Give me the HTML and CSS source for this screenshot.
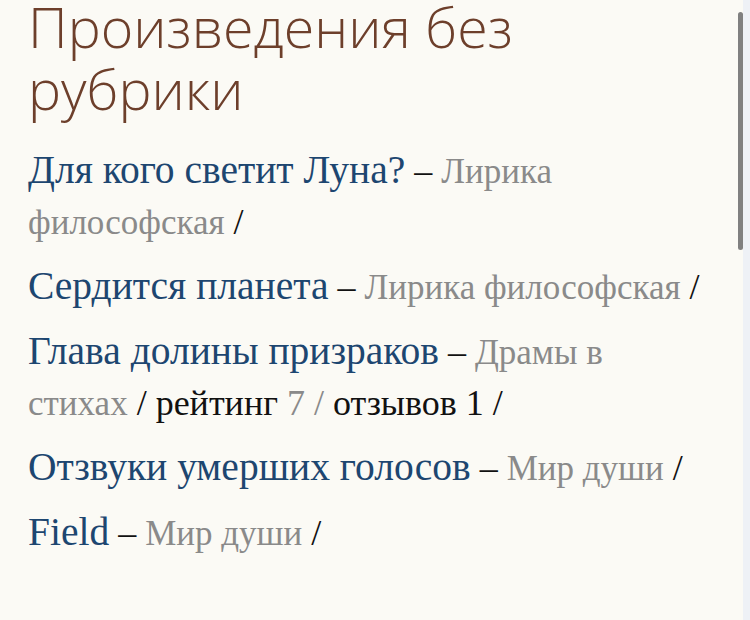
FILE: index.html
```html
<!DOCTYPE html>
<html lang="ru">
<head>
<meta charset="utf-8">
<title>Произведения без рубрики</title>
<link rel="stylesheet" href="styles.css">
</head>
<body>
<main class="page">
  <h1 class="title">Произведения без рубрики</h1>
  <ul class="works">
    <li class="work"><a class="work-link" href="#">Для кого светит Луна?</a> – <a class="rubric" href="#">Лирика философская</a> /</li>
    <li class="work"><a class="work-link" href="#">Сердится планета</a> – <a class="rubric" href="#">Лирика философская</a> /</li>
    <li class="work"><a class="work-link" href="#">Глава долины призраков</a> – <a class="rubric" href="#">Драмы в стихах</a> / рейтинг <span class="muted">7 /</span> отзывов 1 /</li>
    <li class="work"><a class="work-link" href="#">Отзвуки умерших голосов</a> – <a class="rubric" href="#">Мир души</a> /</li>
    <li class="work"><a class="work-link" href="#">Field</a> – <a class="rubric" href="#">Мир души</a> /</li>
  </ul>
</main>
<div class="scrollbar"><div class="scrollbar-thumb"></div></div>
</body>
</html>
```
FILE: styles.css
```css
html, body {
  margin: 0;
  padding: 0;
  background: #fbfaf5;
}
body {
  width: 750px;
  height: 620px;
  overflow: hidden;
}
.page {
  width: 743px;
  box-sizing: border-box;
  padding: 0 32px 0 28px;
}
.title {
  margin: -4px 0 0 0;
  font-family: "Open Sans", sans-serif;
  font-weight: 300;
  font-size: 55.5px;
  line-height: 62px;
  color: #6d3f2b;
}
.works {
  list-style: none;
  margin: 25px 0 0 0;
  padding: 0;
  font-family: "Liberation Serif", serif;
  font-size: 36px;
  line-height: 50px;
  color: #111;
}
.work {
  margin: 0 0 13px 0;
}
.work-link {
  font-size: 39.5px;
  color: #1d4670;
  text-decoration: none;
}
.rubric {
  font-size: 35px;
  color: #8a8a8a;
  text-decoration: none;
}
.muted {
  color: #8a8a8a;
}
.scrollbar {
  position: fixed;
  top: 0;
  right: 0;
  width: 7px;
  height: 620px;
  background: #eef1f6;
}
.scrollbar-thumb {
  position: absolute;
  top: 12px;
  right: 7px;
  width: 5px;
  height: 238px;
  border-radius: 3px;
  background: #808080;
}
```
